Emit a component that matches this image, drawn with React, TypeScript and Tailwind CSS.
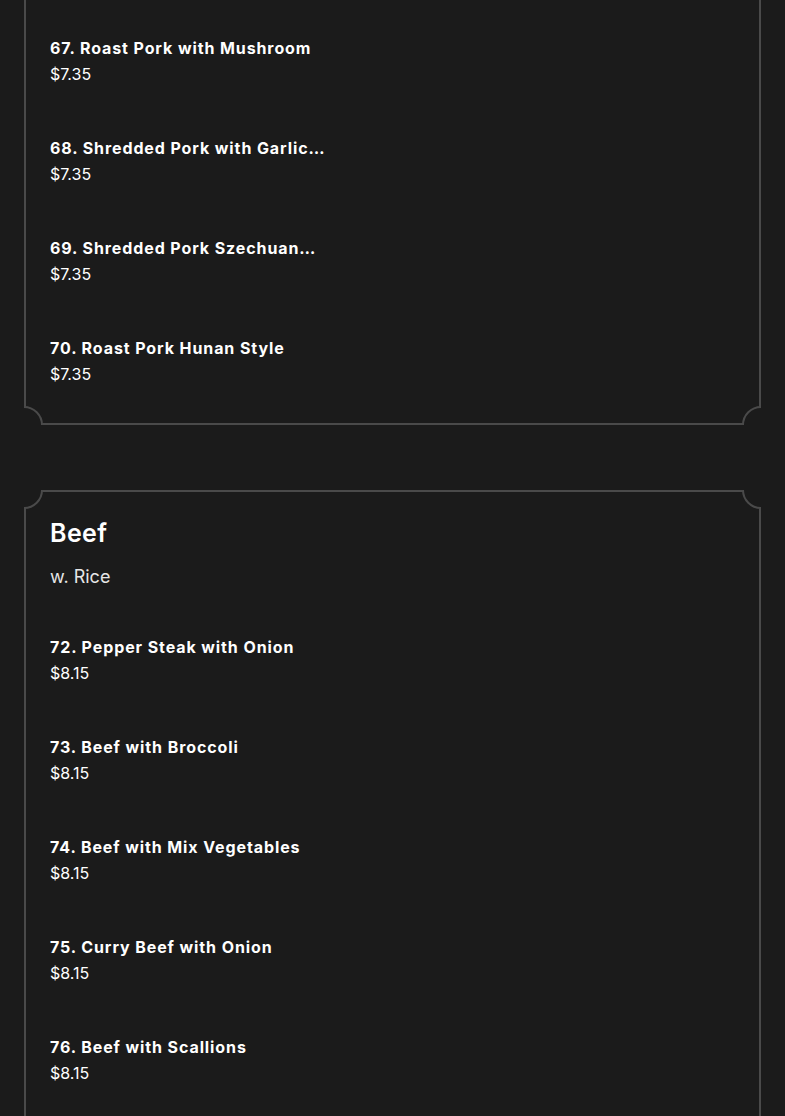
import React from "react";

type Item = { name: string; price: string };

const pork: Item[] = [
  { name: "67. Roast Pork with Mushroom", price: "$7.35" },
  { name: "68. Shredded Pork with Garlic Sauce", price: "$7.35" },
  { name: "69. Shredded Pork Szechuan Style", price: "$7.35" },
  { name: "70. Roast Pork Hunan Style", price: "$7.35" },
];

const beef: Item[] = [
  { name: "72. Pepper Steak with Onion", price: "$8.15" },
  { name: "73. Beef with Broccoli", price: "$8.15" },
  { name: "74. Beef with Mix Vegetables", price: "$8.15" },
  { name: "75. Curry Beef with Onion", price: "$8.15" },
  { name: "76. Beef with Scallions", price: "$8.15" },
];

function Corner({ pos }: { pos: "tl" | "tr" | "bl" | "br" }) {
  const cls =
    pos === "tl"
      ? "-left-[19px] -top-[19px]"
      : pos === "tr"
      ? "-right-[19px] -top-[19px]"
      : pos === "bl"
      ? "-left-[19px] -bottom-[19px]"
      : "-right-[19px] -bottom-[19px]";
  return (
    <div
      className={`absolute ${cls} h-[38px] w-[38px] rounded-full border-2 border-[#4a4a4a] bg-[#1b1b1b]`}
    />
  );
}

function MenuItem({ item }: { item: Item }) {
  return (
    <div className="py-[25px]">
      <div className="h-[24px] w-[290px] overflow-hidden line-clamp-1 text-[16px] leading-[24px] font-bold tracking-[0.9px] text-white">
        {item.name}
      </div>
      <div className="mt-[2px] text-[16px] leading-[24px] text-white">{item.price}</div>
    </div>
  );
}

function Card({
  children,
  clipTop,
  className,
}: {
  children: React.ReactNode;
  clipTop?: boolean;
  className?: string;
}) {
  return (
    <div className={`relative overflow-hidden ${className ?? ""}`}>
      <div
        className={`absolute inset-0 border-2 border-[#4a4a4a] ${clipTop ? "border-t-0" : ""}`}
      />
      {!clipTop && <Corner pos="tl" />}
      {!clipTop && <Corner pos="tr" />}
      <Corner pos="bl" />
      <Corner pos="br" />
      <div className="relative px-[26px]">{children}</div>
    </div>
  );
}

export default function App() {
  return (
    <div
      className="h-[1116px] overflow-hidden bg-[#1b1b1b] px-6 text-white"
      style={{ fontFamily: "Inter, 'Open Sans', sans-serif" }}
    >
      <Card clipTop className="pt-[11px] pb-[14px]">
        {pork.map((it) => (
          <MenuItem key={it.name} item={it} />
        ))}
      </Card>
      <Card className="mt-[65px] pt-[27px] pb-[80px]">
        <h2 className="text-[25px] leading-[32px] font-semibold tracking-[0.4px] text-white">Beef</h2>
        <p className="mt-[16px] text-[18px] leading-[24px] text-[#e6e6e6]">w. Rice</p>
        <div className="mt-[21px]">
          {beef.map((it) => (
            <MenuItem key={it.name} item={it} />
          ))}
        </div>
      </Card>
    </div>
  );
}
